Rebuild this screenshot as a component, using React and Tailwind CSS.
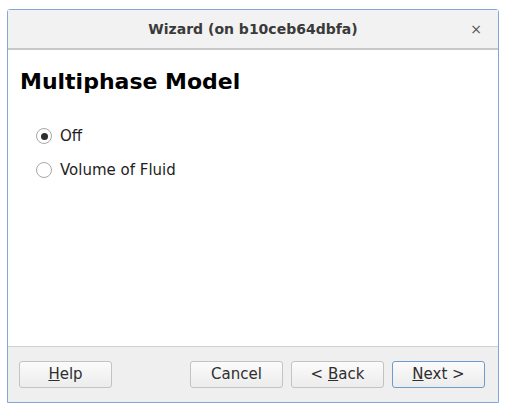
import { useState } from "react";

const Radio = ({ checked, label, onClick }) => (
    <label className="flex items-center gap-[8px] h-[20px] cursor-default" onClick={onClick}>
        <span className="w-[16px] h-[16px] rounded-full border border-[#a8a8a8] bg-white flex items-center justify-center">
            {checked && <span className="w-[7px] h-[7px] rounded-full bg-[#2e2e2e]" />}
        </span>
        <span className="text-[15px] text-[#1e1e1e]">{label}</span>
    </label>
);

const Btn = ({ children, primary }) => (
    <button
        className={`w-[93px] h-[27px] rounded-[3px] border text-[15px] text-[#2e2e2e] bg-gradient-to-b from-[#fbfbfb] to-[#ececec] ${
            primary ? "border-[#6f9ccf]" : "border-[#c3c3c3]"
        }`}
    >
        {children}
    </button>
);

export default function App() {
    const [mode, setMode] = useState("off");

    return (
        <div className="w-[509px] h-[413px] bg-white pt-[9px] pl-[7px]" style={{ fontFamily: "'DejaVu Sans', sans-serif" }}>
            <div className="w-[492px] h-[394px] border border-[#86a6d8] rounded-t-[3px] flex flex-col bg-white">

                {/* Title bar */}
                <div className="h-[40px] bg-[#f2f2f2] border-b-2 border-[#c8c8c8] flex items-center relative">
                    <div className="flex-1 text-center text-[14px] font-bold text-[#3a3a3a]">Wizard (on b10ceb64dbfa)</div>
                    <span className="absolute right-[16px] top-[9px] text-[14px] text-[#555]">×</span>
                </div>

                {/* Body */}
                <div className="flex-1 pl-[12px] pt-[19px]">
                    <h1 className="text-[22px] font-bold text-black leading-[26px]">Multiphase Model</h1>
                    <div className="mt-[31px] pl-[16px] flex flex-col gap-[14px]">
                        <Radio checked={mode === "off"} label="Off" onClick={() => setMode("off")} />
                        <Radio checked={mode === "vof"} label="Volume of Fluid" onClick={() => setMode("vof")} />
                    </div>
                </div>

                {/* Footer */}
                <div className="h-[56px] bg-[#efefef] border-t border-[#cfcfcf] flex items-center pl-[11px] pr-[13px]">
                    <Btn><span className="underline">H</span>elp</Btn>
                    <div className="flex-1" />
                    <div className="flex gap-[8px]">
                        <Btn>Cancel</Btn>
                        <Btn>&lt; <span className="underline">B</span>ack</Btn>
                        <Btn primary><span className="underline">N</span>ext &gt;</Btn>
                    </div>
                </div>
            </div>
        </div>
    );
}
